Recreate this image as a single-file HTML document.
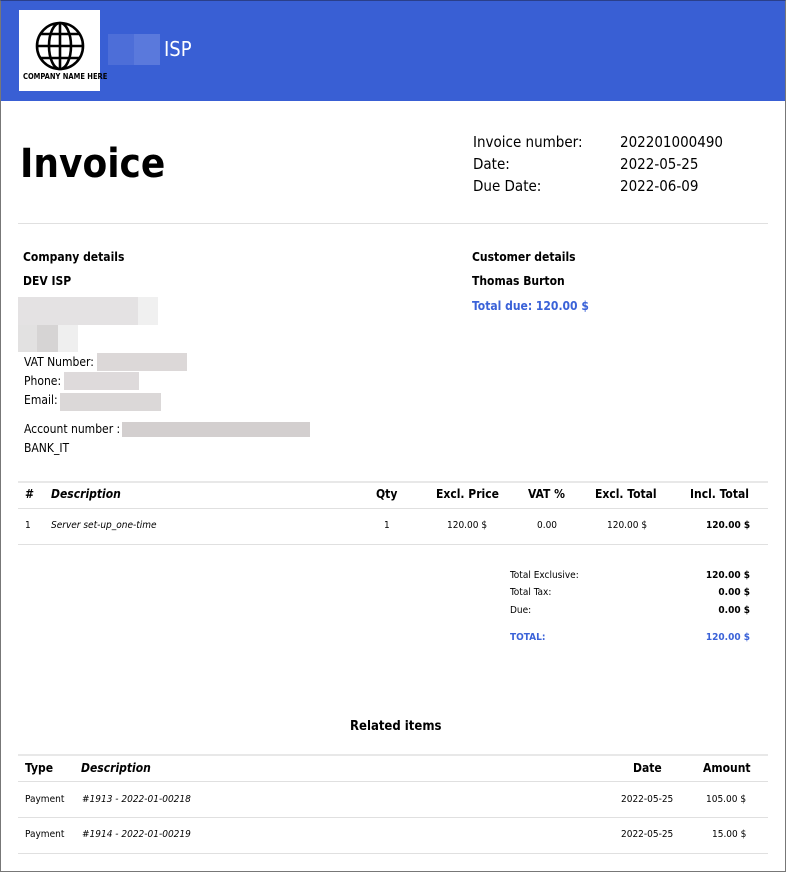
<!DOCTYPE html>
<html><head><meta charset="utf-8"><style>
*{margin:0;padding:0;box-sizing:border-box}
body{width:786px;height:873px;position:relative;background:#fff;font-family:"DejaVu Sans Condensed","DejaVu Sans","Liberation Sans",sans-serif;font-stretch:condensed;color:#000;overflow:hidden}
.a{position:absolute;white-space:nowrap;line-height:1}
.frame{position:absolute;left:0;top:0;width:786px;height:872px;border:1px solid #777;border-top:1px solid #2a3f8a}
.hdr{position:absolute;left:1px;top:1px;width:784px;height:100px;background:#395fd4}
.line{position:absolute;height:1px;background:#e0e0e0;left:18px;width:750px}
.b{font-weight:bold}.i{font-style:italic}
.blue{color:#3a62d8}
.blur{position:absolute}
.s12{font-size:12px}.s10{font-size:10px}
</style></head><body>
<div class="frame"></div>
<div class="hdr"></div>
<div style="position:absolute;left:19px;top:10px;width:81px;height:81px;background:#fff"></div>
<svg style="position:absolute;left:34px;top:21px" width="52" height="50" viewBox="0 0 52 50">
<g fill="none" stroke="#000" stroke-width="2.6">
<circle cx="26" cy="25" r="23"/>
<ellipse cx="26" cy="25" rx="11" ry="23"/>
<line x1="26" y1="2" x2="26" y2="48"/>
<line x1="3" y1="25" x2="49" y2="25"/>
<line x1="7" y1="13" x2="45" y2="13"/>
<line x1="7" y1="37" x2="45" y2="37"/>
</g></svg>
<div class="a b" style="left:23px;top:73px;font-size:7.5px;letter-spacing:0px">COMPANY NAME HERE</div>
<div class="blur" style="left:108px;top:34px;width:26px;height:31px;background:#4d6ed8"></div>
<div class="blur" style="left:134px;top:34px;width:26px;height:31px;background:#5a79dc"></div>
<div class="a" style="left:164px;top:39px;font-size:20px;color:#fff">ISP</div>

<div class="a b" style="left:20px;top:144px;font-size:40px">Invoice</div>
<div class="a" style="left:473px;top:135px;font-size:15px">Invoice number:</div>
<div class="a" style="left:620px;top:135px;font-size:15px">202201000490</div>
<div class="a" style="left:473px;top:157px;font-size:15px">Date:</div>
<div class="a" style="left:620px;top:157px;font-size:15px">2022-05-25</div>
<div class="a" style="left:473px;top:179px;font-size:15px">Due Date:</div>
<div class="a" style="left:620px;top:179px;font-size:15px">2022-06-09</div>
<div class="line" style="top:223px"></div>

<div class="a b s12" style="left:23px;top:251px">Company details</div>
<div class="a b s12" style="left:23px;top:275px">DEV ISP</div>
<div class="blur" style="left:18px;top:297px;width:140px;height:28px;background:#e4e2e3"></div>
<div class="blur" style="left:138px;top:297px;width:20px;height:28px;background:#f0f0f0"></div>
<div class="blur" style="left:18px;top:325px;width:60px;height:27px;background:#e2e1e1"></div>
<div class="blur" style="left:37px;top:325px;width:21px;height:27px;background:#d6d4d4"></div>
<div class="blur" style="left:58px;top:325px;width:20px;height:27px;background:#efefef"></div>
<div class="a s12" style="left:24px;top:356px">VAT Number:</div>
<div class="blur" style="left:97px;top:353px;width:90px;height:18px;background:#dcd8d8"></div>
<div class="a s12" style="left:24px;top:375px">Phone:</div>
<div class="blur" style="left:64px;top:372px;width:75px;height:18px;background:#dedadb"></div>
<div class="a s12" style="left:24px;top:394px">Email:</div>
<div class="blur" style="left:60px;top:393px;width:101px;height:18px;background:#dbd8d8"></div>
<div class="a s12" style="left:24px;top:423px">Account number :</div>
<div class="blur" style="left:122px;top:422px;width:188px;height:15px;background:#d3cfcf"></div>
<div class="a s12" style="left:24px;top:442px">BANK_IT</div>

<div class="a b s12" style="left:472px;top:251px">Customer details</div>
<div class="a b s12" style="left:472px;top:275px">Thomas Burton</div>
<div class="a b s12 blue" style="left:472px;top:300px">Total due: 120.00 $</div>

<div class="line" style="top:481px;height:2px;background:#e8e8e8"></div>
<div class="a b s12" style="left:25px;top:488px">#</div>
<div class="a b i s12" style="left:51px;top:488px">Description</div>
<div class="a b s12" style="left:376px;top:488px">Qty</div>
<div class="a b s12" style="left:436px;top:488px">Excl. Price</div>
<div class="a b s12" style="left:528px;top:488px">VAT %</div>
<div class="a b s12" style="left:595px;top:488px">Excl. Total</div>
<div class="a b s12" style="left:690px;top:488px">Incl. Total</div>
<div class="line" style="top:508px"></div>
<div class="a s10" style="left:25px;top:521px">1</div>
<div class="a i s10" style="left:51px;top:521px">Server set-up_one-time</div>
<div class="a s10" style="left:384px;top:521px">1</div>
<div class="a s10" style="left:447px;top:521px">120.00 $</div>
<div class="a s10" style="left:537px;top:521px">0.00</div>
<div class="a s10" style="left:607px;top:521px">120.00 $</div>
<div class="a b s10" style="left:706px;top:521px">120.00 $</div>
<div class="line" style="top:544px"></div>

<div class="a s10" style="left:510px;top:571px">Total Exclusive:</div>
<div class="a b s10" style="right:36px;top:571px">120.00 $</div>
<div class="a s10" style="left:510px;top:588px">Total Tax:</div>
<div class="a b s10" style="right:36px;top:588px">0.00 $</div>
<div class="a s10" style="left:510px;top:606px">Due:</div>
<div class="a b s10" style="right:36px;top:606px">0.00 $</div>
<div class="a b s10 blue" style="left:510px;top:633px">TOTAL:</div>
<div class="a b s10 blue" style="right:36px;top:633px">120.00 $</div>

<div class="a b" style="left:350px;top:720px;font-size:13px">Related items</div>
<div class="line" style="top:754px;height:2px;background:#e8e8e8"></div>
<div class="a b s12" style="left:25px;top:762px">Type</div>
<div class="a b i s12" style="left:81px;top:762px">Description</div>
<div class="a b s12" style="left:633px;top:762px">Date</div>
<div class="a b s12" style="left:703px;top:762px">Amount</div>
<div class="line" style="top:781px"></div>
<div class="a s10" style="left:25px;top:795px">Payment</div>
<div class="a i s10" style="left:82px;top:795px">#1913 - 2022-01-00218</div>
<div class="a s10" style="left:621px;top:795px">2022-05-25</div>
<div class="a s10" style="left:706px;top:795px">105.00 $</div>
<div class="line" style="top:817px"></div>
<div class="a s10" style="left:25px;top:830px">Payment</div>
<div class="a i s10" style="left:82px;top:830px">#1914 - 2022-01-00219</div>
<div class="a s10" style="left:621px;top:830px">2022-05-25</div>
<div class="a s10" style="left:712px;top:830px">15.00 $</div>
<div class="line" style="top:853px"></div>
</body></html>
